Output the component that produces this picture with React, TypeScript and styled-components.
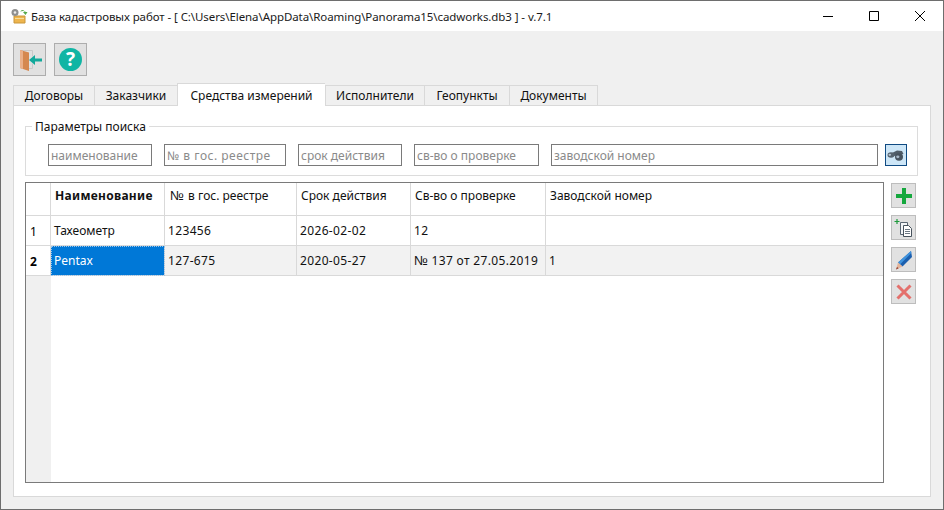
import React from "react";
import styled, { createGlobalStyle } from "styled-components";

const FONT = `"Noto Sans", "Open Sans", sans-serif`;

const GlobalStyle = createGlobalStyle`
  html, body { margin: 0; padding: 0; background: #f0f0f0; }
  body { font-family: ${FONT}; font-size: 12px; color: #000; }
`;

const tabs = [
    { title: "Договоры", width: 81 },
    { title: "Заказчики", width: 83 },
    { title: "Средства измерений", width: 148 },
    { title: "Исполнители", width: 99 },
    { title: "Геопункты", width: 85 },
    { title: "Документы", width: 89 },
];

const filters = [
    { text: "наименование", width: 104 },
    { text: "№ в гос. реестре", width: 122, spaced: true },
    { text: "срок действия", width: 104 },
    { text: "св-во о проверке", width: 125 },
    { text: "заводской номер", width: 327 },
];

const columns = [
    { title: "Наименование", width: 114 },
    { title: "№ в гос. реестре", width: 132 },
    { title: "Срок действия", width: 114 },
    { title: "Св-во о проверке", width: 135 },
    { title: "Заводской номер", width: 338 },
];

const rows = [
    ["Тахеометр", "123456", "2026-02-02", "12", ""],
    ["Pentax", "127-675", "2020-05-27", "№ 137 от 27.05.2019", "1"],
];

// № is too narrow in the font, so it gets its own span
const withNumberSign = (value: string) =>
    value.startsWith("№") ? <><NumberSign>№</NumberSign>{value.slice(1)}</> : value;

const AppIcon = () => (
    <svg width="18" height="16" viewBox="0 0 18 16">
        <path d="M4 8h11v7H4z" fill="#eeb54e" stroke="#c9963a" />
        <path d="M5 10.500h9" stroke="#f8dd9c" />
        <circle cx="5" cy="4.500" r="3.500" fill="#8f8f8f" />
        <circle cx="5" cy="4.500" r="1.300" fill="#ececec" />
        <path d="M10 4a4 3 0 0 1 6 0h1.500l-2 3-2.500-3h1.500a2 2 0 0 0-4 0z" fill="#58a94b" />
    </svg>
);

const DoorIcon = () => (
    <svg width="26" height="24" viewBox="0 0 26 24">
        <path d="M3.500 2.500h12v6M15.500 15.500v5h-5" fill="none" stroke="#c9c9c9" />
        <path d="M3 2l9 2.500V23l-9-3z" fill="#d5884f" />
        <path d="M3 2l3 .8V21l-3-1z" fill="#eab089" />
        <path d="M12 12l6-5v3.500h7v3h-7V17z" fill="#12a99b" />
    </svg>
);

const BinocularsIcon = () => (
    <svg width="18" height="13" viewBox="0 0 18 13">
        <path d="M5 4l5-2.500 5 .5 1.500 3-6 1.500-4 .5z" fill="#4f5c68" />
        <ellipse cx="4" cy="6" rx="3.500" ry="2.700" fill="#56636f" />
        <ellipse cx="12" cy="8" rx="4" ry="3.700" fill="#47535f" />
        <ellipse cx="2.800" cy="5.800" rx="1.300" ry="1.100" fill="#b5c4d2" />
        <ellipse cx="10.800" cy="7.800" rx="1.600" ry="1.400" fill="#a7b8c8" />
    </svg>
);

const PlusIcon = () => (
    <svg width="16" height="16" viewBox="0 0 16 16">
        <path d="M6 0h4v6h6v4h-6v6H6v-6H0V6h6z" fill="#15a83e" />
    </svg>
);

const CopyIcon = () => (
    <svg width="20" height="20" viewBox="0 0 20 20">
        <path d="M3 1v5M.5 3.500h5" stroke="#1f9a3c" strokeWidth="1.200" fill="none" />
        <path d="M6.500 4.500h7v12h-7z" fill="#f4f6f8" stroke="#5a6672" />
        <path d="M9.500 7.500h5l3 3v8h-8z" fill="#fff" stroke="#47525d" />
        <path d="M11 11.500h5M11 13.500h5M11 15.500h5" stroke="#6c7883" />
    </svg>
);

const PencilIcon = () => (
    <svg width="18" height="20" viewBox="0 0 18 20">
        <path d="M16 1l1 6L7.500 16.500 3 12.500z" fill="#1b5fae" />
        <path d="M16 1l.3 2L5 14.500l-2-2z" fill="#3f93dd" />
        <path d="M3 12.500l4.500 4L1 19.500z" fill="#e3b49a" />
        <path d="M2 17l1.700 1.200-2.700 1.300z" fill="#8c3a2e" />
    </svg>
);

const CrossIcon = () => (
    <svg width="16" height="16" viewBox="0 0 16 16">
        <path d="M1.500 1.500l13 13M14.500 1.500l-13 13" stroke="#e4706c" strokeWidth="3" fill="none" />
    </svg>
);

const App = () => (
    <Window>
        <GlobalStyle />
        <TitleBar>
            <AppIcon />
            <Title>База кадастровых работ - [ C:\Users\Elena\AppData\Roaming\Panorama15\cadworks.db3 ] - v.7.1</Title>
            <WindowButtons>
                <WindowButton>
                    <svg width="10" height="10" viewBox="0 0 10 10"><path d="M0 5.500h10" stroke="#000" /></svg>
                </WindowButton>
                <WindowButton>
                    <svg width="10" height="10" viewBox="0 0 10 10"><path d="M.5.500h9v9h-9z" stroke="#000" fill="none" /></svg>
                </WindowButton>
                <WindowButton>
                    <svg width="10" height="10" viewBox="0 0 10 10"><path d="M0 0l10 10M10 0L0 10" stroke="#000" fill="none" /></svg>
                </WindowButton>
            </WindowButtons>
        </TitleBar>
        <Body>
            <Toolbar>
                <ToolButton><DoorIcon /></ToolButton>
                <ToolButton><HelpBadge>?</HelpBadge></ToolButton>
            </Toolbar>
            <TabBar>
                {tabs.map((tab, i) => (
                    <Tab key={tab.title} $active={i === 2} $width={tab.width}>{tab.title}</Tab>
                ))}
            </TabBar>
            <Pane>
                <GroupBox>
                    <GroupTitle>Параметры поиска</GroupTitle>
                    {filters.map((f) => (
                        <Filter key={f.text} $width={f.width} $spaced={f.spaced} placeholder={f.text} readOnly />
                    ))}
                    <SearchButton><BinocularsIcon /></SearchButton>
                </GroupBox>
                <TableRow>
                    <TableBox>
                        <Grid>
                            <colgroup>
                                <col style={{ width: 25 }} />
                                {columns.map((c) => <col key={c.title} style={{ width: c.width }} />)}
                            </colgroup>
                            <thead>
                                <tr>
                                    <HeadCell />
                                    {columns.map((c, i) => (
                                        <HeadCell key={c.title} $bold={i === 0}>{withNumberSign(c.title)}</HeadCell>
                                    ))}
                                </tr>
                            </thead>
                            <tbody>
                                {rows.map((row, r) => (
                                    <BodyRow key={r} $current={r === 1}>
                                        <RowNumber $bold={r === 1}>{r + 1}</RowNumber>
                                        {row.map((value, c) => (
                                            <Cell key={c} $selected={r === 1 && c === 0} $digits={c > 0}>
                                                {withNumberSign(value)}
                                            </Cell>
                                        ))}
                                    </BodyRow>
                                ))}
                            </tbody>
                        </Grid>
                    </TableBox>
                    <SideButtons>
                        <SideButton><PlusIcon /></SideButton>
                        <SideButton><CopyIcon /></SideButton>
                        <SideButton><PencilIcon /></SideButton>
                        <SideButton><CrossIcon /></SideButton>
                    </SideButtons>
                </TableRow>
            </Pane>
        </Body>
    </Window>
);
export default App;

const Window = styled.div`
    width: 944px;
    height: 510px;
    box-sizing: border-box;
    border: 1px solid #6e6e6e;
    display: flex;
    flex-direction: column;
    overflow: hidden;
    background: #f0f0f0;
`;
const TitleBar = styled.div`
    height: 30px;
    flex: none;
    background: #fff;
    display: flex;
    align-items: center;
    padding-left: 9px;
`;
const Title = styled.div`
    margin-left: 3px;
    font-size: 11.5px;
    letter-spacing: -0.08px;
    color: #1a1a1a;
    white-space: nowrap;
`;
const WindowButtons = styled.div`
    margin-left: auto;
    display: flex;
`;
const WindowButton = styled.div`
    width: 46px;
    height: 30px;
    display: flex;
    align-items: center;
    justify-content: center;
`;
const Body = styled.div`
    flex: 1;
    padding: 12px;
    display: flex;
    flex-direction: column;
`;
const Toolbar = styled.div`
    display: flex;
    gap: 8px;
    height: 33px;
    margin-bottom: 7px;
`;
const ToolButton = styled.div`
    width: 33px;
    height: 33px;
    box-sizing: border-box;
    border: 1px solid #adadad;
    background: #e1e1e1;
    display: flex;
    align-items: center;
    justify-content: center;
`;
const HelpBadge = styled.div`
    width: 23px;
    height: 23px;
    border-radius: 50%;
    background: #10b5a4;
    color: #fff;
    font-size: 19px;
    font-weight: 700;
    line-height: 23px;
    text-align: center;
`;
const TabBar = styled.div`
    display: flex;
    align-items: flex-end;
    height: 23px;
    position: relative;
    z-index: 1;
    margin-bottom: -1px;
`;
const Tab = styled.div<{ $active?: boolean; $width: number }>`
    width: ${(p) => p.$width}px;
    height: ${(p) => (p.$active ? 23 : 21)}px;
    box-sizing: border-box;
    border: 1px solid #d9d9d9;
    border-right: none;
    border-bottom: ${(p) => (p.$active ? "none" : "1px solid #d9d9d9")};
    background: ${(p) => (p.$active ? "#fff" : "#f0f0f0")};
    display: flex;
    align-items: center;
    justify-content: center;
    font-size: 12px;
    color: #111;
    &:last-child { border-right: 1px solid #d9d9d9; }
`;
const Pane = styled.div`
    flex: 1;
    box-sizing: border-box;
    border: 1px solid #d9d9d9;
    background: #fff;
    padding: 20px 12px 13px 11px;
    display: flex;
    flex-direction: column;
`;
const GroupBox = styled.div`
    position: relative;
    height: 50px;
    box-sizing: border-box;
    border: 1px solid #dcdcdc;
    display: flex;
    align-items: center;
    gap: 12px;
    padding: 8px 6px 0 22px;
    margin-bottom: 6px;
`;
const GroupTitle = styled.div`
    position: absolute;
    left: 6px;
    top: -8px;
    padding: 0 3px;
    background: #fff;
    font-size: 12px;
    line-height: 16px;
    color: #111;
`;
const Filter = styled.input<{ $width: number; $spaced?: boolean }>`
    width: ${(p) => p.$width}px;
    height: 22px;
    box-sizing: border-box;
    border: 1px solid #7a7a7a;
    padding: 0 2px;
    outline: none;
    font-family: ${FONT};
    font-size: 12px;
    color: #111;
    &::placeholder {
        color: #8a8a8a;
        opacity: 1;
        letter-spacing: ${(p) => (p.$spaced ? "0.5px" : "0")};
    }
`;
const SearchButton = styled.div`
    width: 22px;
    height: 22px;
    margin-left: -5px;
    box-sizing: border-box;
    border: 1px solid #0f4a82;
    background: #cde6f7;
    display: flex;
    align-items: center;
    justify-content: center;
`;
const TableRow = styled.div`
    flex: 1;
    display: flex;
    gap: 7px;
    min-height: 0;
`;
const TableBox = styled.div`
    width: 859px;
    box-sizing: border-box;
    border: 1px solid #7a7a7a;
    background: linear-gradient(to right, #f0f0f0 25px, #fff 25px);
    overflow: hidden;
`;
const Grid = styled.table`
    table-layout: fixed;
    border-collapse: separate;
    border-spacing: 0;
    width: 858px;
`;
const NumberSign = styled.span`
    display: inline-block;
    width: 14px;
    font-family: "Liberation Sans", sans-serif;
    font-size: 13px;
    letter-spacing: 0;
    th & {
        margin-left: 1px;
        width: 15px;
    }
`;
const HeadCell = styled.th<{ $bold?: boolean }>`
    height: 33px;
    box-sizing: border-box;
    padding: 0 0 8px 4px;
    background: #fff;
    border-right: 1px solid #d9d9d9;
    border-bottom: 1px solid #d9d9d9;
    text-align: left;
    font-size: 12px;
    font-weight: ${(p) => (p.$bold ? 700 : 400)};
    letter-spacing: ${(p) => (p.$bold ? "0.3px" : "0")};
    color: #111;
    white-space: nowrap;
    &:last-child { border-right: none; }
`;
const BodyRow = styled.tr<{ $current?: boolean }>`
    background: ${(p) => (p.$current ? "#f2f2f2" : "#fff")};
`;
const RowNumber = styled.td<{ $bold?: boolean }>`
    height: 30px;
    box-sizing: border-box;
    padding: 2px 0 0 4px;
    background: #fff;
    border-right: 1px solid #d9d9d9;
    border-bottom: 1px solid #d9d9d9;
    font-size: 12px;
    font-weight: ${(p) => (p.$bold ? 700 : 400)};
`;
const Cell = styled.td<{ $selected?: boolean; $digits?: boolean }>`
    height: 30px;
    box-sizing: border-box;
    padding: 0 0 1px 3px;
    border-right: 1px solid #d9d9d9;
    border-bottom: 1px solid #d9d9d9;
    font-size: 12px;
    letter-spacing: ${(p) => (p.$digits ? "0.35px" : "0")};
    color: ${(p) => (p.$selected ? "#fff" : "#111")};
    background: ${(p) => (p.$selected ? "#0078d7" : "transparent")};
    outline: ${(p) => (p.$selected ? "1px dotted #9cc4e8" : "none")};
    outline-offset: -1px;
    white-space: nowrap;
    &:last-child { border-right: none; }
`;
const SideButtons = styled.div`
    display: flex;
    flex-direction: column;
    gap: 7px;
    padding-top: 1px;
`;
const SideButton = styled.div`
    width: 25px;
    height: 25px;
    box-sizing: border-box;
    border: 1px solid #bdbdbd;
    background: #e1e1e1;
    display: flex;
    align-items: center;
    justify-content: center;
`;
